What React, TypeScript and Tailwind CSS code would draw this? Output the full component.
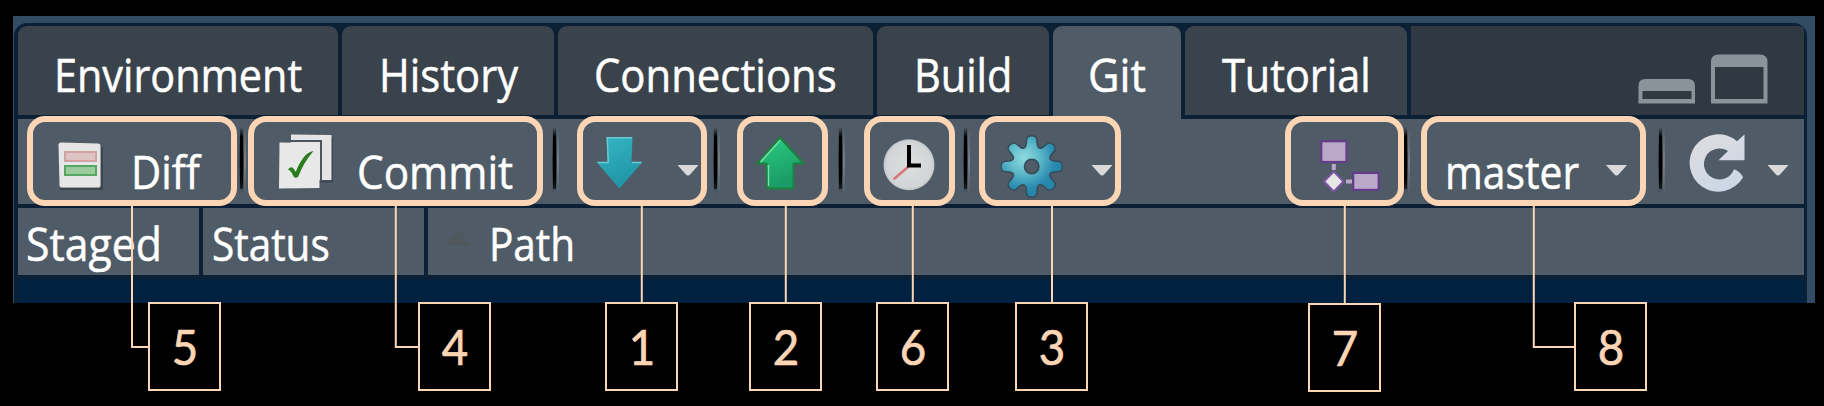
import type { ReactNode } from "react";

const LABEL = "inline-block origin-left whitespace-nowrap [-webkit-text-stroke:0.5px_white]";

function Tab({ label, active, width, pad, fit }: { label: string; active?: boolean; width: string; pad: string; fit: string }) {
  return (
    <div className={`shrink-0 rounded-t-[9px] pt-[4px] leading-[89px] ${width} ${pad} ${active ? "h-[93px] bg-[#4f5c67]" : "h-[89px] bg-[#3a434b]"}`}>
      <span className={`${LABEL} ${fit}`}>{label}</span>
    </div>
  );
}

function Separator({ className }: { className: string }) {
  return (
    <div className={`mt-[8px] flex h-[68px] w-[8px] shrink-0 ${className}`}>
      <div className="w-px bg-linear-to-b from-transparent via-black/40 to-transparent" />
      <div className="w-[3px] bg-linear-to-b from-transparent from-0% via-black via-15% to-transparent to-100%">
        <div className="mt-[9px] h-[53px] bg-linear-to-b from-black from-80% to-black/60" />
      </div>
      <div className="w-px bg-linear-to-b from-transparent via-black/40 to-transparent" />
      <div className="w-[2px] bg-linear-to-b from-transparent via-[#75808a] to-transparent" />
    </div>
  );
}

function Button({ children, className }: { children: ReactNode; className: string }) {
  return <div className={`flex h-[85px] shrink-0 ${className}`}>{children}</div>;
}

function Art({ x, w, children, className }: { x: number; w: number; children: ReactNode; className: string }) {
  return (
    <svg className={`h-[85px] shrink-0 ${className}`} viewBox={`${x} 119 ${w} 85`}>
      {children}
    </svg>
  );
}

function Caret({ x }: { x: number }) {
  return <path d={`M${x} 165h21l-8 9q-2.5 3-5 0z`} fill="#d9d9d9" />;
}

function gearPath(cx: number, cy: number) {
  const at = (r: number, deg: number) => {
    const a = (deg * Math.PI) / 180;
    return `${(cx + r * Math.cos(a)).toFixed(2)} ${(cy + r * Math.sin(a)).toFixed(2)}`;
  };
  let d = "";
  for (let i = 0; i < 8; i++) {
    const c = i * 45;
    d += `${i ? "L" : "M"}${at(21.5, c - 13.5)}L${at(25.5, c - 10)}C${at(29, c - 9.5)} ${at(30, c - 6)} ${at(30, c)}C${at(30, c + 6)} ${at(29, c + 9.5)} ${at(25.5, c + 10)}L${at(21.5, c + 13.5)}Q${at(17, c + 22.5)} ${at(21.5, c + 31.5)}`;
  }
  return `${d}ZM${cx - 8} ${cy}a8 8 0 1 0 16 0a8 8 0 1 0 -16 0Z`;
}

const frames = [
  "left-[27px] w-[210px]",
  "left-[248px] w-[295px]",
  "left-[577px] w-[130px]",
  "left-[737px] w-[91px]",
  "left-[864px] w-[91px]",
  "left-[979px] w-[142px]",
  "left-[1285px] w-[119px]",
  "left-[1421px] w-[225px]",
];

const callouts = [
  { n: 5, pos: "left-[148px] top-[302px]" },
  { n: 4, pos: "left-[418px] top-[302px]" },
  { n: 1, pos: "left-[605px] top-[302px]" },
  { n: 2, pos: "left-[749px] top-[302px]" },
  { n: 6, pos: "left-[876px] top-[302px]" },
  { n: 3, pos: "left-[1015px] top-[302px]" },
  { n: 7, pos: "left-[1308px] top-[303px]" },
  { n: 8, pos: "left-[1574px] top-[302px]" },
];

export default function App() {
  return (
    <div className="relative h-[406px] w-[1824px] overflow-hidden bg-black pt-[16px] pl-[13px] font-['Open_Sans','Noto_Sans',sans-serif] text-[45px] text-white">
      <div className="h-[287px] w-[1802px] bg-[#314c64] pt-[7px] pr-[8px] pl-px">
        <div className="h-[280px] rounded-t-[13px] bg-[#0b2035] px-[4px] pt-[3px] pr-[3px]">
          <div className="flex h-[93px] gap-[4px]">
            <Tab label="Environment" width="w-[320px]" pad="pl-[36px]" fit="scale-x-[0.919]" />
            <Tab label="History" width="w-[212px]" pad="pl-[37px]" fit="scale-x-[0.928]" />
            <Tab label="Connections" width="w-[315px]" pad="pl-[36px]" fit="scale-x-[0.93]" />
            <Tab label="Build" width="w-[172px]" pad="pl-[37px]" fit="scale-x-[0.92]" />
            <Tab label="Git" active width="w-[128px]" pad="pl-[35px]" fit="scale-x-[0.965]" />
            <Tab label="Tutorial" width="w-[222px]" pad="pl-[37px]" fit="scale-x-[0.92]" />
            <div className="flex h-[89px] grow justify-end rounded-tr-[4px] bg-[#303841] pr-[36px]">
              <svg className="h-[89px] w-[134px]" viewBox="1634 26 134 89" fill="#8a939a" fillRule="evenodd">
                <path d="M1638.5 103.5V86q0-7 7-7h42.500q7 0 7 7v17.500zM1642.500 91v8h49v-8z" />
                <path d="M1711 103.500V62q0-7.500 7.500-7.500h41.500q7.500 0 7.500 7.500v41.500zM1715 67v32h48.500V67z" />
              </svg>
            </div>
          </div>

          <div className="flex h-[85px] bg-[#4f5c67] pl-[9px] leading-[105px]">
            <Button className="w-[210px]">
              <Art x={27} w={104} className="w-[104px]">
                <path d="M60 189h42V147" stroke="#2b353d" strokeOpacity=".55" strokeWidth="2" fill="none" />
                <path d="M61 142.500 98 143.500q2.500 0 2.500 2.500V185q0 2.500-2.500 2.500H62q-2.500 0-2.500-2.500L58.500 145q0-2.500 2.500-2.500z" fill="#e6e6e6" />
                <rect x="65" y="152" width="31" height="9" fill="#dfc2c3" stroke="#cfa3a4" strokeWidth="2" />
                <rect x="65" y="166" width="31" height="9" fill="#9acb9b" stroke="#57a663" strokeWidth="2" />
              </Art>
              <span className={`${LABEL} scale-x-[0.925]`}>Diff</span>
            </Button>
            <Separator className="ml-[2px]" />
            <Button className="ml-px w-[295px]">
              <Art x={248} w={109} className="w-[109px]">
                <path d="M293 181.500h39V138" stroke="#2b353d" strokeOpacity=".55" strokeWidth="2" fill="none" />
                <path d="M291 134.500 331.500 135V180H291z" fill="#e4e4e4" />
                <path d="M291 141h30v40" stroke="#4a555e" strokeWidth="2" fill="none" />
                <path d="M279.500 142.500 319.500 143V188L279 188.500z" fill="#e8e8e8" />
                <path d="M288 169.500Q291 166 293 168L295.800 171.800C300 161.500 305.500 152 313.500 151C306.500 159 301.500 168 298.200 176.800Q295.500 178.800 293.500 176.500Q291.500 171 288 169.500z" fill="#2a7d1d" />
              </Art>
              <span className={`${LABEL} scale-x-[0.94]`}>Commit</span>
            </Button>
            <Separator className="ml-[9px]" />
            <Button className="ml-[17px] w-[130px]">
              <Art x={577} w={130} className="w-[130px]">
                <defs>
                  <linearGradient id="pull" x1="0" y1="0" x2="0.4" y2="1">
                    <stop offset="0" stopColor="#36b6c2" />
                    <stop offset="1" stopColor="#2095a8" />
                  </linearGradient>
                </defs>
                <path d="M606.500 137H632.500L631.500 162H642.500L619.500 188.500L596.500 162H607.500z" fill="url(#pull)" />
                <path d="M597.500 162.500H608.300L607.300 137.800H632M632 162.500H641.500" stroke="#69cbd3" strokeWidth="1.400" fill="none" />
                <Caret x={677.5} />
              </Art>
            </Button>
            <Separator className="ml-[6px]" />
            <Button className="ml-[16px] w-[91px]">
              <Art x={737} w={91} className="w-[91px]">
                <defs>
                  <linearGradient id="push" x1="0" y1="0" x2="0.3" y2="1">
                    <stop offset="0" stopColor="#29cd80" />
                    <stop offset="1" stopColor="#1a9a66" />
                  </linearGradient>
                </defs>
                <path d="M780 137.500 803.500 163.500H793.500V188.500H767.500L766.500 163.500H757.500z" fill="url(#push)" stroke="#1c823f" strokeWidth="2" strokeLinejoin="round" />
                <path d="M760.500 162 780 140.500M768.500 165V186" stroke="#7be0a9" strokeWidth="1.400" fill="none" />
              </Art>
            </Button>
            <Separator className="ml-[10px]" />
            <Button className="ml-[18px] w-[91px]">
              <Art x={864} w={91} className="w-[91px]">
                <defs>
                  <radialGradient id="face">
                    <stop offset="0" stopColor="#dedfdf" />
                    <stop offset="0.900" stopColor="#d2d5d6" />
                    <stop offset="1" stopColor="#bcc2c5" />
                  </radialGradient>
                </defs>
                <circle cx="909" cy="164.800" r="25.500" fill="url(#face)" />
                <path d="M908 167 894.500 178.500" stroke="#d67a7c" strokeWidth="2.800" strokeLinecap="round" />
                <path d="M909 145V165.500H921" stroke="#000" strokeWidth="4" fill="none" />
              </Art>
            </Button>
            <Separator className="ml-[8px]" />
            <Button className="ml-[8px] w-[142px]">
              <Art x={979} w={142} className="w-[142px]">
                <defs>
                  <radialGradient id="gear" gradientUnits="userSpaceOnUse" cx="1024" cy="158" r="36">
                    <stop offset="0" stopColor="#8fdbe0" />
                    <stop offset="0.400" stopColor="#62bccb" />
                    <stop offset="0.850" stopColor="#2a8bb0" />
                    <stop offset="1" stopColor="#2585ab" />
                  </radialGradient>
                </defs>
                <path d={gearPath(1031.7, 166.5)} fill="none" stroke="#2c4553" strokeOpacity=".75" strokeWidth="3" />
                <path d={gearPath(1031.7, 166.5)} fill="url(#gear)" fillRule="evenodd" />
                <Caret x={1091.5} />
              </Art>
            </Button>
            <Button className="ml-auto w-[119px]">
              <Art x={1285} w={119} className="w-[119px]">
                <path d="M1333.800 164V170M1346 181.500H1352" stroke="#b9a8c8" strokeWidth="4" />
                <rect x="1321.300" y="141.200" width="25.200" height="20.800" fill="#b9a8c8" stroke="#643d8a" strokeWidth="2.200" />
                <rect x="1353.200" y="172.900" width="25.500" height="17" fill="#b9a8c8" stroke="#643d8a" strokeWidth="2.200" />
                <path d="M1333.800 171.500 1343.500 181.500 1333.800 191.500 1324 181.500z" fill="#e6e6e6" stroke="#7a55a0" strokeWidth="2" strokeLinejoin="round" />
              </Art>
            </Button>
            <Separator className="-ml-px" />
            <Button className="ml-[10px] w-[225px] justify-between">
              <span className={`${LABEL} ml-[24px] w-[132px] scale-x-[0.907]`}>master</span>
              <Art x={1600} w={46} className="w-[46px]">
                <Caret x={1606} />
              </Art>
            </Button>
            <Separator className="ml-[12px]" />
            <Button className="w-[138px]">
              <Art x={1666} w={138} className="w-[138px]">
                <defs>
                  <linearGradient id="refresh" x1="0" y1="0" x2="0.600" y2="1">
                    <stop offset="0" stopColor="#dedede" />
                    <stop offset="1" stopColor="#cdd6e6" />
                  </linearGradient>
                </defs>
                <path d="M1744.500 134.500V160.300H1718.500L1728 151A15.500 15.500 0 1 0 1734 169.300Q1740 171 1743 177.500A28.700 28.700 0 1 1 1737 141.200z" fill="url(#refresh)" />
                <Caret x={1767.5} />
              </Art>
            </Button>
          </div>

          <div className="mt-[4px] flex h-[67px] gap-[4px] leading-[71px]">
            <div className="w-[181px] bg-[#4f5c67] pl-[8px]">
              <span className={`${LABEL} scale-x-[0.95]`}>Staged</span>
            </div>
            <div className="w-[221px] bg-[#4f5c67] pl-[9px]">
              <span className={`${LABEL} scale-x-[0.9]`}>Status</span>
            </div>
            <div className="flex grow items-start bg-[#4f5c67] pl-[16px]">
              <svg className="mt-[22px] mr-[16px] h-[16px] w-[29px]" viewBox="0 0 29 16">
                <path d="M14.500 1 29 16H0z" fill="#50585d" />
              </svg>
              <span className={`${LABEL} scale-x-[0.9]`}>Path</span>
            </div>
          </div>
          <div className="mt-[4px] h-[24px] bg-[#002140]" />
        </div>
      </div>

      {frames.map((f) => (
        <div key={f} className={`absolute top-[116px] h-[90px] rounded-[18px] border-[6px] border-[#fcd5b5] ${f}`} />
      ))}
      <svg className="absolute top-0 left-0 h-[406px] w-[1824px]" viewBox="0 0 1824 406" fill="none" stroke="#fcd5b5" strokeWidth="2">
        <path d="M132 205V347H149M395.800 205V347H419M641.800 205V303M785.800 205V303M912.800 205V303M1052 205V303M1344.800 205V304M1533.800 205V347H1575" />
      </svg>
      {callouts.map((c) => (
        <div
          key={c.n}
          className={`absolute flex h-[89px] w-[73px] items-center justify-center border-2 border-[#fcd5b5] bg-black font-['Lato',sans-serif] text-[48px] leading-none text-[#fcd5b5] ${c.pos}`}
        >
          <span className="scale-x-[0.95] [-webkit-text-stroke:0.7px_#fcd5b5]">{c.n}</span>
        </div>
      ))}
    </div>
  );
}
